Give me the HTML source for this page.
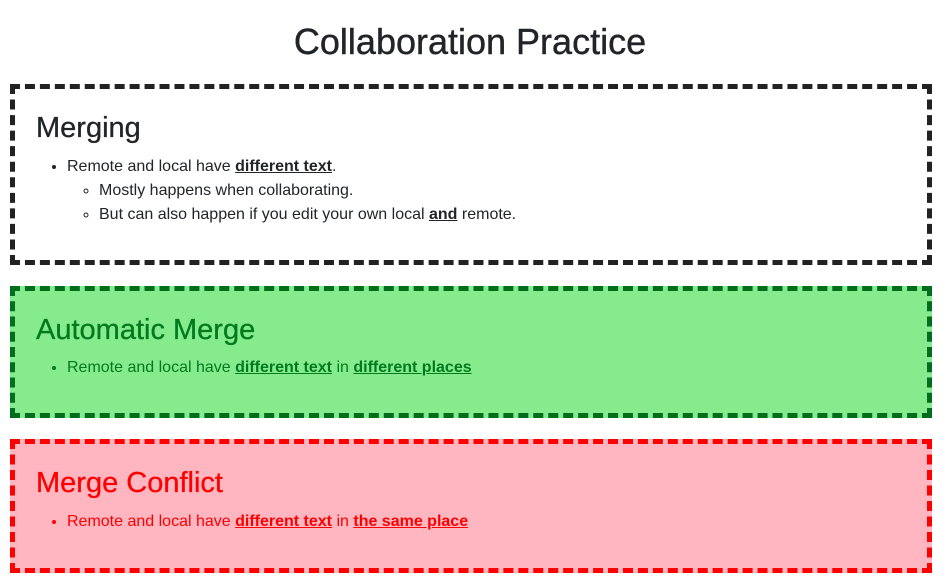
<!DOCTYPE html>
<html><head><style>
body{margin:0;background:#fff;font-family:"Liberation Sans",sans-serif;color:#212529;width:945px;height:588px;overflow:hidden}
h1{margin:0;position:absolute;top:21px;left:0;width:940px;text-align:center;font-size:36px;font-weight:500;line-height:42px;-webkit-text-stroke:0.4px #212529}
.box{position:absolute;left:10px;width:912px;border:5px dashed #222;box-sizing:content-box}
.box h2{position:absolute;left:21px;margin:0;font-size:29px;font-weight:500;line-height:34px;-webkit-text-stroke:0.3px currentColor}
.box ul{position:absolute;left:21px;margin:0;padding-left:31px;font-size:16px;line-height:24px}
.box ul ul{position:static;padding-left:32px;list-style:circle}
b{text-decoration:underline}
</style></head><body>
<h1>Collaboration Practice</h1>
<div class="box" style="top:84px;height:171px">
<h2 style="top:22px">Merging</h2>
<ul style="top:66px"><li>Remote and local have <b>different text</b>.
<ul><li>Mostly happens when collaborating.</li><li>But can also happen if you edit your own local <b>and</b> remote.</li></ul></li></ul>
</div>
<div class="box" style="top:286px;height:122px;background:#85eb8d;border-color:#006e1c;color:#007a1e">
<h2 style="top:22px">Automatic Merge</h2>
<ul style="top:65px"><li>Remote and local have <b>different text</b> in <b>different places</b></li></ul>
</div>
<div class="box" style="top:439px;height:124px;background:#ffb6c1;border-color:#ff0000;color:#ff0000">
<h2 style="top:22px">Merge Conflict</h2>
<ul style="top:66px"><li>Remote and local have <b>different text</b> in <b>the same place</b></li></ul>
</div>
</body></html>
